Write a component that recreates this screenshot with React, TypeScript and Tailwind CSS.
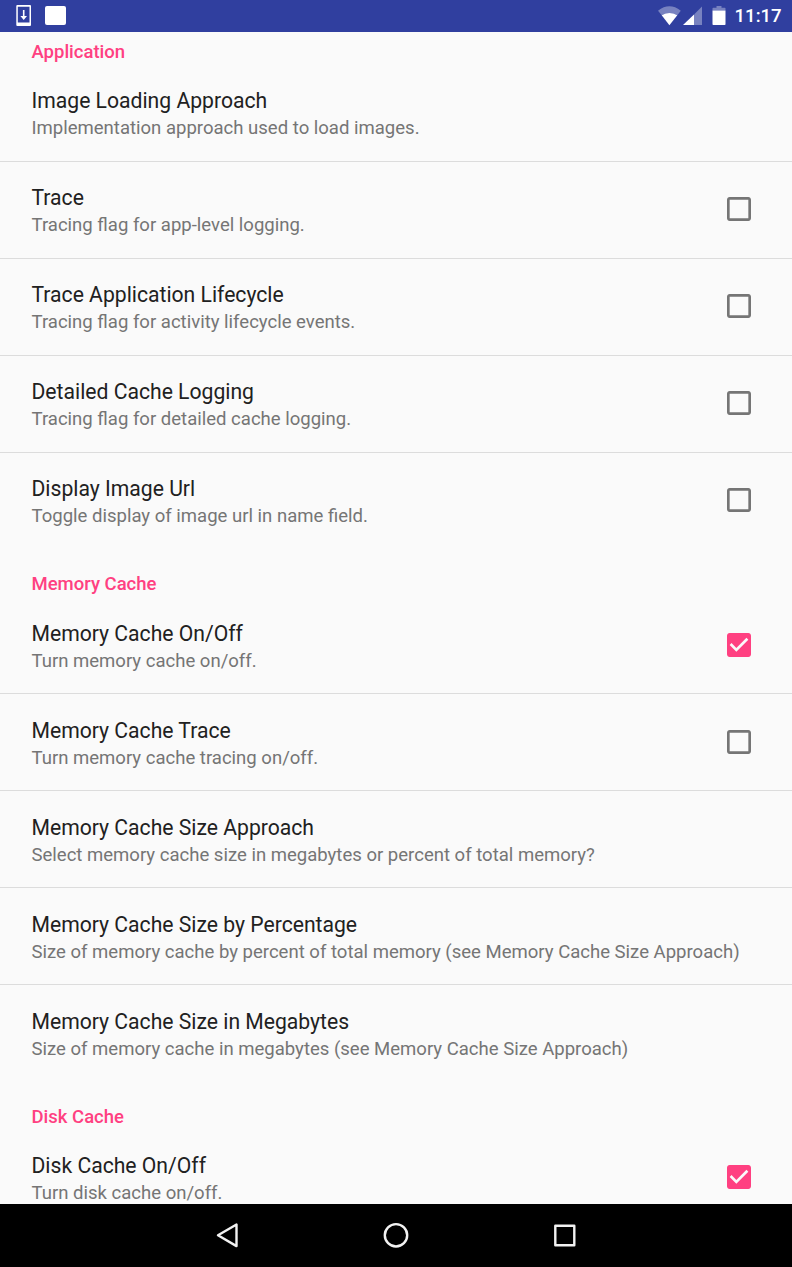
type Row = { t: string; s: string; c?: boolean };
const groups: { name: string; rows: Row[] }[] = [
  { name: "Application", rows: [
    { t: "Image Loading Approach", s: "Implementation approach used to load images." },
    { t: "Trace", s: "Tracing flag for app-level logging.", c: false },
    { t: "Trace Application Lifecycle", s: "Tracing flag for activity lifecycle events.", c: false },
    { t: "Detailed Cache Logging", s: "Tracing flag for detailed cache logging.", c: false },
    { t: "Display Image Url", s: "Toggle display of image url in name field.", c: false },
  ] },
  { name: "Memory Cache", rows: [
    { t: "Memory Cache On/Off", s: "Turn memory cache on/off.", c: true },
    { t: "Memory Cache Trace", s: "Turn memory cache tracing on/off.", c: false },
    { t: "Memory Cache Size Approach", s: "Select memory cache size in megabytes or percent of total memory?" },
    { t: "Memory Cache Size by Percentage", s: "Size of memory cache by percent of total memory (see Memory Cache Size Approach)" },
    { t: "Memory Cache Size in Megabytes", s: "Size of memory cache in megabytes (see Memory Cache Size Approach)" },
  ] },
  { name: "Disk Cache", rows: [
    { t: "Disk Cache On/Off", s: "Turn disk cache on/off.", c: true },
  ] },
];

function Checkbox({ checked }: { checked: boolean }) {
  return (
    <svg width="32" height="32" viewBox="0 0 24 24" className="mb-px mr-[37px] shrink-0">
      {checked ? (
        <path fill="#ff4081" d="M19 3H5c-1.11 0-2 .9-2 2v14c0 1.1.89 2 2 2h14c1.11 0 2-.9 2-2V5c0-1.1-.89-2-2-2zm-9 14l-5-5 1.41-1.41L10 14.17l7.59-7.59L19 8l-9 9z" />
      ) : (
        <path fill="#757575" d="M19 5v14H5V5h14m0-2H5c-1.1 0-2 .9-2 2v14c0 1.1.9 2 2 2h14c1.1 0 2-.9 2-2V5c0-1.1-.9-2-2-2z" />
      )}
    </svg>
  );
}

export default function App() {
  return (
    <div className="flex h-[1267px] w-[792px] flex-col overflow-hidden bg-[#fafafa] font-['Roboto',sans-serif]">
      <header className="flex h-[31.5px] shrink-0 items-center justify-between bg-[#303f9f] text-white">
        <svg width="80" height="32" viewBox="0 0 80 32" className="shrink-0">
          <path fill="#fff" fillRule="evenodd" d="M17.300 5H30Q31 5 31 6V25Q31 26 30 26H17.300Q16.300 26 16.300 25V6Q16.300 5 17.300 5ZM17.800 6.700V22.500H29.500V6.700Z" />
          <path fill="#fff" d="M22.900 10h1.600v6H27L23.700 20l-3.300-4h2.500Z" />
          <rect x="45" y="6" width="21" height="19" rx="2" fill="#fff" />
        </svg>
        <div className="flex items-center">
          <svg width="77" height="32" viewBox="0 0 77 32" fill="#fff" className="shrink-0">
            <path d="M0 10.700Q11.400 2 22.800 10.700L19.300 15.300Q11.400 10.500 3.700 15.300Z" opacity=".35" />
            <path d="M3.700 15.300Q11.400 10.500 19.300 15.300L11.400 25.200Z" />
            <path d="M44 6.500V25H36V14.400Z" opacity=".35" />
            <path d="M36 14.400V25H25Z" />
            <path d="M54.500 10.500V8.500Q54.500 7.800 55.200 7.800H58.500V6H63.500V7.800H66.800Q67.500 7.800 67.500 8.500V10.500Z" opacity=".35" />
            <path d="M54.500 10.500H67.500V24.200Q67.500 25 66.700 25H55.300Q54.500 25 54.500 24.200Z" />
          </svg>
          <span className="w-[57.500px] pt-[3px] text-[18.600px] font-medium">11:17</span>
        </div>
      </header>
      <main className="min-h-0 flex-1 overflow-hidden pt-[0.500px]">
        {groups.map((g) => (
          <section key={g.name} className="pb-[15px]">
            <h2 className="h-[32.500px] pl-[31.500px] pt-[7.500px] text-[18.500px] font-medium leading-[24px] text-[#ff4081]">{g.name}</h2>
            {g.rows.map((r, i) => (
              <div key={r.t} className={"flex h-[97px] items-center justify-between border-b " + (i < g.rows.length - 1 ? "border-[#dcdcdc]" : "border-transparent")}>
                <div className="pl-[31.500px] pt-[3.200px]">
                  <h3 className="text-[21.150px] leading-[28px] text-[#212121]">{r.t}</h3>
                  <p className="whitespace-nowrap text-[18.540px] leading-[26px] text-[#757575]">{r.s}</p>
                </div>
                {r.c !== undefined && <Checkbox checked={r.c} />}
              </div>
            ))}
          </section>
        ))}
      </main>
      <nav className="h-[63.500px] shrink-0 bg-black">
        <svg width="792" height="64" viewBox="0 0 792 64" fill="none" stroke="#f2f2f2" strokeWidth="2.400" strokeLinejoin="round">
          <path d="M218 31.300 236.500 20.500V42.100Z" />
          <circle cx="396" cy="31.300" r="11.200" />
          <rect x="555.300" y="21.700" width="19" height="19.500" />
        </svg>
      </nav>
    </div>
  );
}
